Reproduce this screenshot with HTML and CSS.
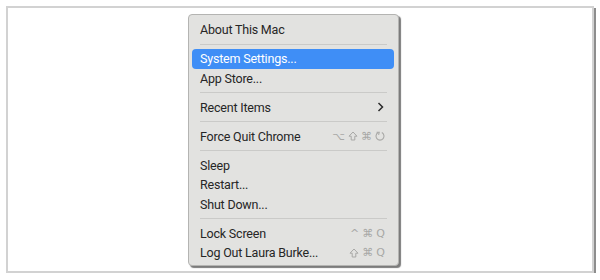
FILE: index.html
```html
<!DOCTYPE html>
<html lang="en">
<head>
    <meta charset="UTF-8">
    <title>Apple Menu</title>
    <link rel="stylesheet" href="styles.css">
</head>
<body>
    <div class="frame">
        <div class="menu">
            <div class="item"><span>About This Mac</span></div>
            <div class="sep"></div>
            <div class="item active"><span>System Settings...</span></div>
            <div class="item"><span>App Store...</span></div>
            <div class="sep"></div>
            <div class="item">
                <span>Recent Items</span>
                <svg class="chev" width="7" height="10" viewBox="0 0 7 10"><path d="M1.5 1 L5.5 5 L1.5 9" fill="none" stroke="#2a2a2a" stroke-width="1.5"/></svg>
            </div>
            <div class="sep"></div>
            <div class="item">
                <span>Force Quit Chrome</span>
                <span class="keys">
                    <span>⌥</span>
                    <svg width="10" height="10" viewBox="0 0 10 10"><path d="M5 1 L9 5.2 L6.8 5.2 L6.8 9 L3.2 9 L3.2 5.2 L1 5.2 Z" fill="none" stroke="#a8a8a6" stroke-width="1" stroke-linejoin="round"/></svg>
                    <span>⌘</span>
                    <svg width="10" height="10" viewBox="0 0 10 10"><path d="M3.2 1.6 A4 4 0 1 0 6.8 1.6" fill="none" stroke="#a8a8a6" stroke-width="1.1"/><path d="M1.6 1.3 L4.2 1.3 L3.6 3.8" fill="none" stroke="#a8a8a6" stroke-width="1.1"/></svg>
                </span>
            </div>
            <div class="sep"></div>
            <div class="item"><span>Sleep</span></div>
            <div class="item"><span>Restart...</span></div>
            <div class="item"><span>Shut Down...</span></div>
            <div class="sep"></div>
            <div class="item">
                <span>Lock Screen</span>
                <span class="keys"><span>^</span><span>⌘</span><span>Q</span></span>
            </div>
            <div class="item">
                <span>Log Out Laura Burke...</span>
                <span class="keys">
                    <svg width="10" height="10" viewBox="0 0 10 10"><path d="M5 1 L9 5.2 L6.8 5.2 L6.8 9 L3.2 9 L3.2 5.2 L1 5.2 Z" fill="none" stroke="#a8a8a6" stroke-width="1" stroke-linejoin="round"/></svg>
                    <span>⌘</span><span>Q</span>
                </span>
            </div>
        </div>
    </div>
</body>
</html>
```

FILE: styles.css
```css
body {
    margin: 0;
    background-color: #ffffff;
    font-family: 'Roboto', 'Liberation Sans', sans-serif;
}

.frame {
    margin: 6px 0 0 6px;
    width: 588px;
    height: 267px;
    box-sizing: border-box;
    border: 2px solid #d2d2d2;
    box-shadow: 2px 2px 0 #8d8d8d;
    padding: 6px 0 0 180px;
}

.menu {
    width: 211px;
    box-sizing: border-box;
    background-color: #e2e2e0;
    border: 1px solid #b4b4b2;
    border-radius: 4px;
    box-shadow: 2px 2px 1px #7b7b7b;
    padding: 5px 4px 2px 3px;
}

.item {
    height: 19.5px;
    display: flex;
    align-items: center;
    justify-content: space-between;
    padding: 0 9px 0 8px;
    font-size: 12.5px;
    letter-spacing: -0.2px;
    color: #262626;
    border-radius: 4px;
}

.item.active {
    background-color: #3f8ef6;
    color: #ffffff;
}

.sep {
    height: 1px;
    margin: 4.25px 7px 4.25px 8px;
    background-color: #cacac8;
}

.chev {
    margin-right: 1px;
}

.keys {
    font-family: 'DejaVu Sans', sans-serif;
    font-size: 11px;
    letter-spacing: 0;
    color: #a8a8a6;
    display: flex;
    align-items: center;
    gap: 3px;
}
```
